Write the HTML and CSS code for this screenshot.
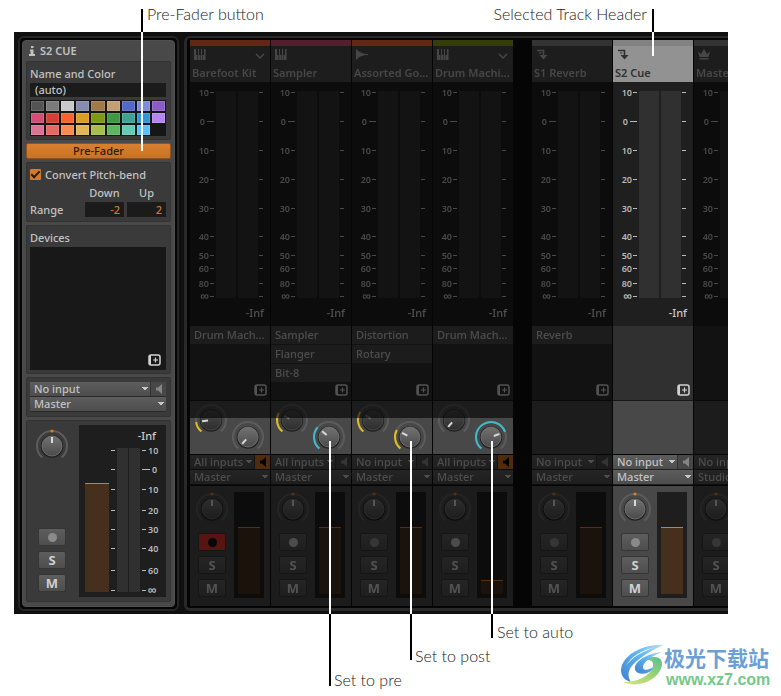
FILE: index.html
```html
<!DOCTYPE html>
<html lang="en">
<head>
<meta charset="utf-8">
<title>Mixer: send modes</title>
<link rel="stylesheet" href="styles.css">
</head>
<body>
<svg class="defs" aria-hidden="true">
  <defs>
    <linearGradient id="cap" x1="0" y1="0" x2="0" y2="1"><stop offset="0" stop-color="#727272"/><stop offset="1" stop-color="#4b4b4b"/></linearGradient>
    <linearGradient id="capdark" x1="0" y1="0" x2="0" y2="1"><stop offset="0" stop-color="#4c4c4c"/><stop offset="1" stop-color="#2d2d2d"/></linearGradient>
    <linearGradient id="swirlBlue" x1="0" y1="1" x2="1" y2="0"><stop offset="0" stop-color="#3f7fd0"/><stop offset=".6" stop-color="#62b8ee"/><stop offset="1" stop-color="#b9dcf3"/></linearGradient>
    <linearGradient id="swirlGreen" x1="0" y1="1" x2="1" y2="0"><stop offset="0" stop-color="#d9e67d"/><stop offset=".55" stop-color="#9bd474"/><stop offset="1" stop-color="#56bd94"/></linearGradient>
  </defs>
  <symbol id="keys" viewBox="0 0 12 11"><path fill="currentColor" d="M0 0h2v6h1.500v5H0zM4 0h1v6h1v5H4.200zM7 0h1v11H6.500V6H7zM10 0h1.500v11H8.500V6H10z"/></symbol>
  <symbol id="wave" viewBox="0 0 12 11"><path fill="currentColor" d="M0 0l2 1.500L3 3l1-.5L5 4l1-.5.500 1L8 4.200l.5.700H12v1H8.500L8 6.500l-1-.3-1 1-1-.5-1 1.500-1-.6L2 9.500 0 11z"/></symbol>
  <symbol id="send" viewBox="0 0 12 11"><path fill="none" stroke="currentColor" stroke-width="1.600" d="M1 1.500h6.500v7"/><path fill="currentColor" d="M3.500 6h8l-4 4.500z"/><path stroke="currentColor" stroke-width="1.200" d="M3 4h2.500"/></symbol>
  <symbol id="crown" viewBox="0 0 12 11"><path fill="currentColor" d="M0 2.500L3 5l3-5 3 5 3-2.500L10.500 8h-9zM1.500 9h9v1.500h-9z"/></symbol>
  <symbol id="add" viewBox="0 0 13 12"><rect x="1" y="1" width="11" height="10" rx="2" fill="none" stroke="currentColor" stroke-width="1.500"/><path fill="none" stroke="currentColor" stroke-width="2" d="M2 1.500v9"/><path stroke="currentColor" stroke-width="1.200" d="M5 6h5M7.500 3.500v5"/></symbol>
  <symbol id="speaker" viewBox="0 0 8 10"><path fill="currentColor" d="M1 3.500h2L7 0v10L3 6.500H1z"/></symbol>
</svg>

<figure class="figure">
  <main class="app">
    <aside class="frame inspector-frame">
      <div class="inspector">
        <h1 class="title"><svg width="6" height="10" viewBox="0 0 6 10" aria-hidden="true"><path fill="currentColor" d="M2 0h2.500v2H2zM1 3.500h3.500V8H6v2H0V8h1.500V5H1z"/></svg>S2 CUE</h1>
        <section class="box name-box">
          <label class="caption" for="name">Name and Color</label>
          <input class="field" id="name" type="text" value="(auto)">
          <div class="swatches" id="swatches"></div>
        </section>
        <button class="prefader" type="button">Pre-Fader</button>
        <section class="box pitch">
          <label class="check"><input type="checkbox" checked>Convert Pitch-bend</label>
          <div class="range">
            <label for="down">Down</label><label for="up">Up</label>
            <span>Range</span><input id="down" type="text" value="-2"><input id="up" type="text" value="2">
          </div>
        </section>
        <section class="box devices-box">
          <h2 class="caption">Devices</h2>
          <div class="device-list"><button class="add" type="button" aria-label="Add device"><svg width="13" height="12"><use href="#add"/></svg></button></div>
        </section>
        <section class="box io-box">
          <div class="io">
            <select aria-label="Input"><option>No input</option></select><button class="monitor" type="button" aria-label="Monitor"><svg width="8" height="10"><use href="#speaker"/></svg></button>
            <select class="wide" aria-label="Output"><option>Master</option></select>
          </div>
        </section>
        <section class="box channel">
          <div class="strip" id="strip"></div>
          <div class="big-meter" id="bigmeter"></div>
        </section>
      </div>
    </aside>
    <section class="frame mixer" id="mixer" aria-label="Mixer"></section>
  </main>

  <svg class="lines" aria-hidden="true">
    <path class="ink" d="M142 9v23M653 9v23M330 614v72M411 614v46M492 614v24"/>
    <path class="chalk" d="M142 32v119M653 32v24M330 441v173M411 441v173M492 441v173"/>
  </svg>
  <figcaption>
    <span class="note n1">Pre-Fader button</span>
    <span class="note n2">Selected Track Header</span>
    <span class="note n3">Set to auto</span>
    <span class="note n4">Set to post</span>
    <span class="note n5">Set to pre</span>
  </figcaption>
  <div class="brand">
    <svg width="44" height="42" viewBox="0 0 44 42" aria-hidden="true">
      <path fill="url(#swirlBlue)" d="M43 1C27 0 8 7 2 21c-3 8 1 15 9 17-5-7-2-15 6-21C24 11 32 6 43 1z"/>
      <path fill="#fff" d="M36 3C22 6 11 12 6 22 12 13 23 7 36 3z"/>
      <path fill="url(#swirlGreen)" d="M3 38c9 4 21 3 29-3 8-5 12-14 9-19-2-4-11-4-17 0 6-1 10 1 9 6-1 8-13 16-30 16z"/>
      <path fill="url(#swirlBlue)" d="M42 8c-12 1-25 7-27 15-1 5 4 8 12 6 3-1 6-3 6-6-4 3-9 4-10 1-1-5 8-12 19-16z"/>
    </svg>
    <div><b>极光下载站</b><span>www.xz7.com</span></div>
  </div>
</figure>
<script src="app.js"></script>
</body>
</html>
```
FILE: styles.css
```css
* { box-sizing: border-box; }
body { margin: 0; background: #fff; font: 500 11px/14px "Noto Sans", "Open Sans", sans-serif; color: #c2c2c2; }
button, input, select { font: inherit; color: inherit; margin: 0; padding: 0; border: 0; border-radius: 0; outline: 0; appearance: none; }
h1, h2, h3, figure { margin: 0; font: inherit; }
svg { display: block; }
.defs { position: absolute; width: 0; height: 0; }
.figure { position: relative; min-height: 696px; padding: 32px 53px 0 14px; }
.app { display: flex; gap: 5px; padding: 4px 0 3px 4px; background: #101010; overflow: hidden; }

.frame { border: 2px solid #252525; border-radius: 6px; background: #050505; }
.inspector-frame { flex: none; width: 161px; padding: 2px; }
.inspector { display: flex; flex-direction: column; gap: 3px; padding: 0 3px 4px; border: 1px solid #505050; border-radius: 4px; background: #494949; }
.title { display: flex; align-items: center; gap: 5px; height: 17px; padding: 3px 0 0 3px; font-weight: 600; }
.box { padding: 4px 4px 4px 3px; border: 1px solid #323232; border-radius: 2px; background: #3a3a3a; }
.caption { display: block; height: 17px; padding-top: 1px; }
.name-box { height: 79px; }
.field { display: block; width: 100%; height: 14px; padding: 0 5px; background: #1b1b1b; }
.swatches { display: grid; grid-template-columns: repeat(9, 1fr); gap: 2px; margin-top: 3px; padding: 1px; height: 36px; background: #161616; }
.swatches button { box-shadow: inset 0 0 0 1px #ffffff22; }
.prefader { height: 16px; border: 1px solid #8e5320; border-radius: 2px; background: linear-gradient(#d8802f, #c87225); color: #2c1c0e; line-height: 14px; }
.pitch { height: 60px; }
.check { display: flex; align-items: center; gap: 4px; height: 15px; }
.check input { display: grid; place-items: center; width: 11px; height: 11px; border-radius: 1px; background: #d27a2b; }
.check input::before { content: ""; width: 7px; height: 3px; border: solid #2a1a0c; border-width: 0 0 2px 2px; transform: translateY(-1px) rotate(-45deg); }
.range { display: grid; grid-template-columns: 1fr 39px 39px; column-gap: 3px; row-gap: 2px; padding-top: 3px; line-height: 15px; }
.range label { text-align: center; }
.range label:first-child { grid-column: 2; }
.range input { width: 39px; height: 15px; padding-right: 4px; text-align: right; background: #1b1b1b; color: #d27a2b; }
.devices-box { height: 149px; }
.device-list { display: flex; justify-content: flex-end; align-items: flex-end; height: 123px; padding: 4px 5px; background: #181818; }
.add { width: 13px; height: 12px; background: none; color: #d2d2d2; }
.io-box { height: 40px; }
.io { display: grid; grid-template-columns: 1fr 16px; height: 30px; background: #2a2a2a; gap: 1px 0; padding-bottom: 1px; }
.io select { width: 100%; height: 14px; padding: 0 4px; line-height: 14px; background: linear-gradient(to bottom right, #c8c8c8 60%, transparent 60%) no-repeat right 2px top 5px / 3px 3px, linear-gradient(to bottom left, #c8c8c8 60%, transparent 60%) no-repeat right 5px top 5px / 3px 3px, linear-gradient(#5d5d5d, #4d4d4d); }
.io .wide { grid-column: 1 / -1; }
.monitor { display: grid; place-items: center; height: 14px; border-left: 1px solid #333; background: #474747; color: #858585; }
.monitor.on { background: #cf701f; color: #000; }
.channel { display: flex; justify-content: space-between; height: 182px; }
.strip { display: flex; flex-direction: column; align-items: center; gap: 5px; width: 44px; }
.channel .strip { padding-top: 4px; }
.channel .knob { margin-bottom: 60px; }
.knob { display: block; }
.key { display: grid; place-items: center; width: 28px; height: 18px; border: 1px solid #353535; border-radius: 2px; background: linear-gradient(#5e5e5e, #4e4e4e); color: #cfcfcf; font-size: 13px; font-weight: 700; line-height: 14px; }
.key i { width: 9px; height: 9px; border-radius: 50%; background: #8a8a8a; }
.key.ready i { background: #c4c4c4; }
.key.armed { background: #e2342a; }
.key.armed i { background: #111; }
.big-meter { width: 87px; background: #1e1e1e; }
text { font: 600 9px "Noto Sans", sans-serif; fill: #b8b8b8; }
.inf { font-size: 11px; font-weight: 500; fill: #cacaca; }
.infinity { font-size: 12px; }

.mixer { display: flex; flex: 1; min-width: 0; gap: 1px; margin-right: -6px; padding: 2px 2px 2px 3px; border: 3px solid #292929; border-width: 2px 3px 3px; overflow: hidden; }
.track { flex: none; width: 80px; }
.track.apart { margin-left: 18px; }
.dim { filter: brightness(.39); }
.head { height: 42px; border-top: 6px solid var(--tint); background: #4b4b4b; color: #b4b4b4; }
.selected .head { background: #929292; color: #303030; }
.icons { display: flex; justify-content: space-between; height: 20px; padding: 3px 5px 0 4px; }
.head h3 { padding-left: 2px; font-weight: 600; white-space: nowrap; }
.meter { height: 244px; background: #1f1f1f; }
.slots { display: grid; grid-template-rows: repeat(3, 18px) 1fr; row-gap: 1px; height: 75px; border-bottom: 1px solid #161616; background: #2d2d2d; }
.slots span { padding: 2px 4px; background: #484848; white-space: nowrap; }
.slots .add { grid-row: 4; justify-self: end; margin: 1px 3px 0 0; }
.selected .slots { background: #303030; }
.sends { height: 53px; background: #484848; }
.sends.lit { position: relative; display: flex; gap: 3px; padding: 2px 0 0 4px; }
.sends.lit::after { content: ""; position: absolute; inset: 0 0 auto; height: 17px; background: rgba(0, 0, 0, .61); }
.sends.lit .knob + .knob { margin-top: 17px; }
.track .io { margin: 1px 0; background: #222; }
.faders { display: flex; height: 120px; padding: 6px 6px 0 0; justify-content: space-between; background: #484848; }
.faders .knob { margin-bottom: 2px; }
.level { display: flex; align-items: flex-end; width: 30px; height: 106px; padding: 4px; background: #1e1e1e; }
.level div { width: 100%; border-top: 1px solid #d87a25; background: #462f1c; }

.lines { position: absolute; inset: 0; width: 100%; height: 100%; pointer-events: none; fill: none; stroke-width: 2; }
.ink { stroke: #000; }
.chalk { stroke: #fff; }
.note { position: absolute; font: 300 16px/18px Lato, sans-serif; color: #222; white-space: nowrap; }
.n1 { left: 147px; top: 5px; }
.n2 { right: 134px; top: 5px; }
.n3 { left: 497px; top: 623px; }
.n4 { left: 415px; top: 647px; }
.n5 { left: 334px; top: 671px; }
.brand { position: absolute; left: 620px; top: 644px; display: flex; }
.brand b { display: block; font: 700 21px/26px "Noto Sans CJK SC", sans-serif; color: #6c9fd6; white-space: nowrap; }
.brand span { display: block; padding-left: 2px; font: 700 16px/20px "Liberation Sans", sans-serif; color: #74c98a; }
```
FILE: app.js
```js
const colors = ['#545454', '#7b7b7b', '#c9c9c9', '#868cac', '#a07a48', '#c49f73', '#5468c8', '#818bdc', '#8d5bc8',
  '#d14e76', '#d14235', '#f6642d', '#db9f28', '#7c9a16', '#3d9944', '#3da394', '#2f98d8', '#b386f0',
  '#dc7295', '#e56a60', '#f88b4d', '#e2b657', '#a7bd4d', '#5bb561', '#62cdb4', '#56c4fb'];
document.getElementById('swatches').innerHTML =
  colors.map(c => `<button type="button" aria-label="${c}" style="background:${c}"></button>`).join('');

const polar = (deg, r) => {
  const a = (deg - 90) * Math.PI / 180;
  return `${(17 + r * Math.cos(a)).toFixed(2)} ${(17 + r * Math.sin(a)).toFixed(2)}`;
};
const arc = (from, to, color) =>
  `<path fill="none" stroke="${color}" stroke-width="2" d="M${polar(from, 15)}A15 15 0 ${to - from > 180 ? 1 : 0} 1 ${polar(to, 15)}"/>`;

// Angles run clockwise from the top; the dial spans -140 to 140 degrees.
function knob(angle, color, dark) {
  return `<svg class="knob" width="34" height="34" viewBox="0 0 34 34">
    ${arc(-140, 140, '#5c5c5c')}${color === 'pan' ? '' : color ? arc(-140, angle, color) : ''}
    <circle cx="17" cy="17.500" r="11.200" fill="#222"/><circle cx="17" cy="17" r="10" fill="url(#${dark ? 'capdark' : 'cap'})" stroke="${dark ? '#4c4c4c' : '#777'}" stroke-width=".8"/>
    <path stroke="${dark && angle > -90 ? '#777' : '#d8d8d8'}" stroke-width="2" d="M${polar(angle, 3)}L${polar(angle, 9)}"/>
    ${color === 'pan' ? '<circle cx="17" cy="2" r="1.600" fill="#e07a22"/>' : ''}</svg>`;
}
const keys = rec => `<button class="key ${rec}" type="button" aria-label="Record"><i></i></button>
  <button class="key" type="button">S</button><button class="key" type="button">M</button>`;
const label = (t, x, y, anchor) =>
  `<text class="${t === '∞' ? 'infinity' : ''}" x="${x}" y="${y + 4}" text-anchor="${anchor}">${t}</text>`;

const marks = [['10', 10], ['0', 39], ['10', 68], ['20', 97], ['30', 126], ['40', 154], ['50', 173], ['60', 186], ['80', 201], ['∞', 214]];
const scale = `<svg width="80" height="244"><path fill="#303030" d="M26 9h20v207H26zM48 9h20v207H48z"/>` +
  marks.map(([t, y]) => label(t, t === '0' ? 15 : 19, y, 'end') +
    `<path fill="#bbb" d="M${t === '0' ? 17 : 20} ${y}H24v1H${t === '0' ? 17 : 20}zM69 ${y}h4v1h-4z"/>`).join('') +
  `<text class="inf" x="74" y="235" text-anchor="end">-Inf</text></svg>`;

const bigMarks = [['10', 25], ['0', 44], ['10', 64], ['20', 85], ['30', 104], ['40', 123], ['60', 145], ['∞', 165]];
document.getElementById('bigmeter').innerHTML = `<svg width="87" height="172">
  <path fill="#462f1c" d="M6 59h24v108H6z"/><path fill="#d87a25" d="M6 58h24v1H6z"/>
  <path fill="#303030" d="M38 23h11v144H38zM50 23h11v144H50z"/>
  <text class="inf" x="77" y="15" text-anchor="end">-Inf</text>` +
  bigMarks.map(([t, y]) => `<path fill="#bbb" d="M32 ${y}h4v1h-4zM63 ${y}h${t === '0' ? 8 : 4}v1h-${t === '0' ? 8 : 4}z"/>` +
    label(t, t === '0' ? 73 : 69, y, 'start')).join('') + `</svg>`;
document.getElementById('strip').innerHTML = knob(0, 'pan') + keys('');

const Y = '#e0bd22', C = '#3dbccb';
const tracks = [
  { name: 'Barefoot Kit', icon: 'keys', menu: 1, tint: '#f46433', slots: ['Drum Mach...'], sends: [[-98, Y], [-140, '']], input: 'All inputs', on: 1, rec: 'armed', level: 67 },
  { name: 'Sampler', icon: 'keys', tint: '#cf5279', slots: ['Sampler', 'Flanger', 'Bit-8'], sends: [[-62, Y], [-50, C]], input: 'All inputs', rec: 'ready', level: 67 },
  { name: 'Assorted Go...', icon: 'wave', tint: '#f46433', slots: ['Distortion', 'Rotary'], sends: [[-58, Y], [-62, Y]], input: 'No input', rec: '', level: 67 },
  { name: 'Drum Machi...', icon: 'keys', menu: 1, tint: '#8a9c1f', slots: ['Drum Mach...'], sends: [[-140, ''], [70, C]], input: 'All inputs', on: 1, rec: 'ready', level: 14 },
  { name: 'S1 Reverb', icon: 'send', apart: 1, tint: '#828282', slots: ['Reverb'], input: 'No input', rec: '', level: 67 },
  { name: 'S2 Cue', icon: 'send', selected: 1, tint: '#828282', slots: [], input: 'No input', rec: '', level: 67 },
  { name: 'Master', icon: 'crown', tint: '#828282', slots: [], input: 'No input', output: 'Studio', rec: '', level: 67 }
];
document.getElementById('mixer').innerHTML = tracks.map(t => {
  const dim = t.selected ? '' : 'dim';
  return `<article class="track ${t.selected ? 'selected' : ''} ${t.apart ? 'apart' : ''}">
    <header class="head ${dim}" style="--tint:${t.tint}"><div class="icons"><svg width="12" height="11"><use href="#${t.icon}"/></svg>
      ${t.menu ? '<svg width="10" height="14"><path d="M1 5l4 4 4-4" fill="none" stroke="currentColor" stroke-width="1.500"/></svg>' : ''}</div><h3>${t.name}</h3></header>
    <div class="meter ${dim}">${scale}</div>
    <div class="slots ${dim}">${t.slots.map(s => `<span>${s}</span>`).join('')}
      <button class="add" type="button" aria-label="Add device">${t.name === 'Master' ? '' : '<svg width="13" height="12"><use href="#add"/></svg>'}</button></div>
    <div class="sends ${t.sends ? 'lit' : dim}">${t.sends ? t.sends.map((s, i) => knob(s[0], s[1], i === 0)).join('') : ''}</div>
    <div class="io ${dim}"><select aria-label="${t.name} input"><option>${t.input}</option></select><button class="monitor ${t.on ? 'on' : ''}" type="button" aria-label="Monitor"><svg width="8" height="10"><use href="#speaker"/></svg></button>
      <select class="wide" aria-label="${t.name} output"><option>${t.output || 'Master'}</option></select></div>
    <div class="faders ${dim}"><div class="strip">${knob(0, 'pan')}${keys(t.rec)}</div><div class="level"><div style="height:${t.level}px"></div></div></div>
  </article>`;
}).join('');
```
